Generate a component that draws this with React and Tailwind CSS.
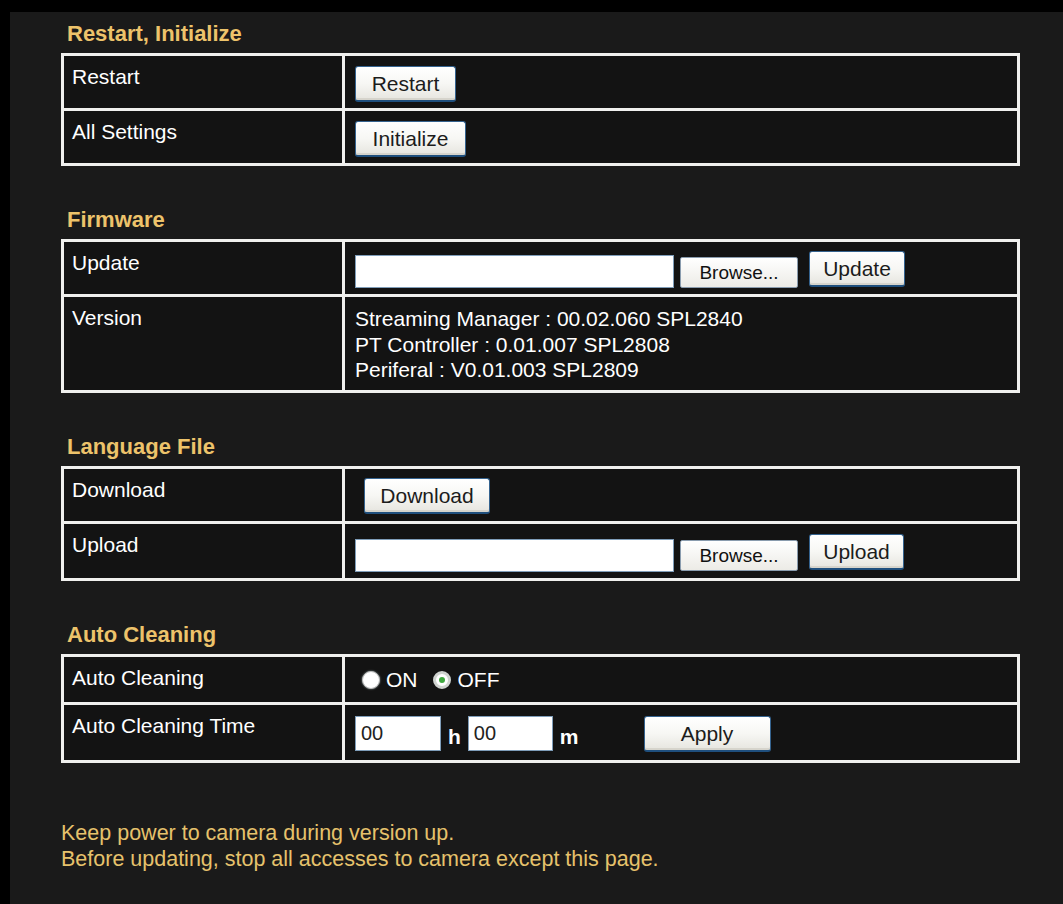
import React from "react";

const Btn = ({ children, w, h = "h-[36px]" }) => (
  <button
    className={`${w} ${h} shrink-0 rounded-[3px] border border-[#35638f] border-b-2 border-b-[#1f4f7d] bg-gradient-to-b from-white via-[#f7f7f4] to-[#e6e5df] text-[21px] leading-none text-[#1c1c1c] shadow-[inset_0_-2px_0_#d6d4cc]`}
  >
    {children}
  </button>
);

const Browse = () => (
  <button className="h-[31px] w-[118px] shrink-0 rounded-[2px] border border-[#8a9cae] bg-gradient-to-b from-white to-[#ecebe6] text-[19px] leading-none text-[#111]">
    Browse...
  </button>
);

const Title = ({ children, first }) => (
  <div
    className={`${first ? "" : "mt-[41px]"} h-[26px] pl-[6px] text-[22px] font-bold leading-[26px] text-[#edc36b]`}
  >
    {children}
  </div>
);

const Row = ({ label, h, first, children, cls = "pt-[10px]" }) => (
  <div className={`flex ${h} ${first ? "" : "border-t-[3px] border-[#f0f0ee]"}`}>
    <div className="w-[281px] shrink-0 border-r-[3px] border-[#f0f0ee] pl-[8px] pt-[9px] text-[21px] leading-[24px] text-white">
      {label}
    </div>
    <div className={`flex-1 pl-[10px] ${cls}`}>{children}</div>
  </div>
);

const Table = ({ children }) => (
  <div className="mt-[6px] w-[959px] border-[3px] border-[#f0f0ee] bg-[#131313]">{children}</div>
);

const TextBox = ({ w, h, value, mt }) => (
  <div
    className={`${w} ${h} ${mt || ""} shrink-0 border border-[#7f9db9] bg-white pl-[5px] text-[20px] leading-[33px] text-[#222]`}
  >
    {value}
  </div>
);

export default function App() {
  return (
    <div className="min-h-screen w-full border-l-[10px] border-t-[12px] border-black bg-[#1a1a1a] font-['Liberation_Sans',Arial,sans-serif]">
      <div className="pl-[51px] pt-[9px]">
        <Title first>Restart, Initialize</Title>
        <Table>
          <Row first label="Restart" h="h-[52px]">
            <Btn w="w-[101px]">Restart</Btn>
          </Row>
          <Row label="All Settings" h="h-[55px]">
            <Btn w="w-[111px]">Initialize</Btn>
          </Row>
        </Table>

        <Title>Firmware</Title>
        <Table>
          <Row first label="Update" h="h-[52px]" cls="pt-[9px]">
            <div className="flex items-start">
              <TextBox w="w-[319px]" h="h-[33px]" mt="mt-[4px]" />
              <div className="ml-[6px] mt-[6px]">
                <Browse />
              </div>
              <div className="ml-[11px]">
                <Btn w="w-[96px]">Update</Btn>
              </div>
            </div>
          </Row>
          <Row label="Version" h="h-[96px]" cls="pt-[9px]">
            <div className="text-[21px] leading-[25.5px] text-white">
              <div>Streaming Manager : 00.02.060 SPL2840</div>
              <div>PT Controller : 0.01.007 SPL2808</div>
              <div>Periferal : V0.01.003 SPL2809</div>
            </div>
          </Row>
        </Table>

        <Title>Language File</Title>
        <Table>
          <Row first label="Download" h="h-[52px]" cls="pt-[9px]">
            <div className="pl-[9px]">
              <Btn w="w-[126px]">Download</Btn>
            </div>
          </Row>
          <Row label="Upload" h="h-[57px]" cls="pt-[10px]">
            <div className="flex items-start">
              <TextBox w="w-[319px]" h="h-[33px]" mt="mt-[5px]" />
              <div className="ml-[6px] mt-[6px]">
                <Browse />
              </div>
              <div className="ml-[11px]">
                <Btn w="w-[95px]">Upload</Btn>
              </div>
            </div>
          </Row>
        </Table>

        <Title>Auto Cleaning</Title>
        <Table>
          <Row first label="Auto Cleaning" h="h-[45px]" cls="pt-[11px]">
            <div className="flex items-center pl-[7px] text-[21px] leading-[24px] text-white">
              <span className="h-[18px] w-[18px] rounded-full border border-[#b8b8b8] bg-white shadow-[0_0_2px_#9aa]" />
              <span className="ml-[6px]">ON</span>
              <span className="ml-[15px] flex h-[18px] w-[18px] items-center justify-center rounded-full border-[3px] border-[#cfd3cf] bg-white">
                <span className="h-[6px] w-[6px] rounded-full bg-[#3fa83f]" />
              </span>
              <span className="ml-[7px]">OFF</span>
            </div>
          </Row>
          <Row label="Auto Cleaning Time" h="h-[58px]" cls="pt-[11px]">
            <div className="flex items-start text-white">
              <TextBox w="w-[86px]" h="h-[35px]" value="00" />
              <span className="ml-[7px] mt-[9px] text-[21px] font-bold leading-[24px]">h</span>
              <div className="ml-[7px]">
                <TextBox w="w-[85px]" h="h-[35px]" value="00" />
              </div>
              <span className="ml-[7px] mt-[9px] text-[21px] font-bold leading-[24px]">m</span>
              <div className="ml-[65px]">
                <Btn w="w-[127px]">Apply</Btn>
              </div>
            </div>
          </Row>
        </Table>

        <div className="mt-[57px] pb-[20px] text-[21.5px] leading-[26px] text-[#e6c26c]">
          <div>Keep power to camera during version up.</div>
          <div>Before updating, stop all accesses to camera except this page.</div>
        </div>
      </div>
    </div>
  );
}
